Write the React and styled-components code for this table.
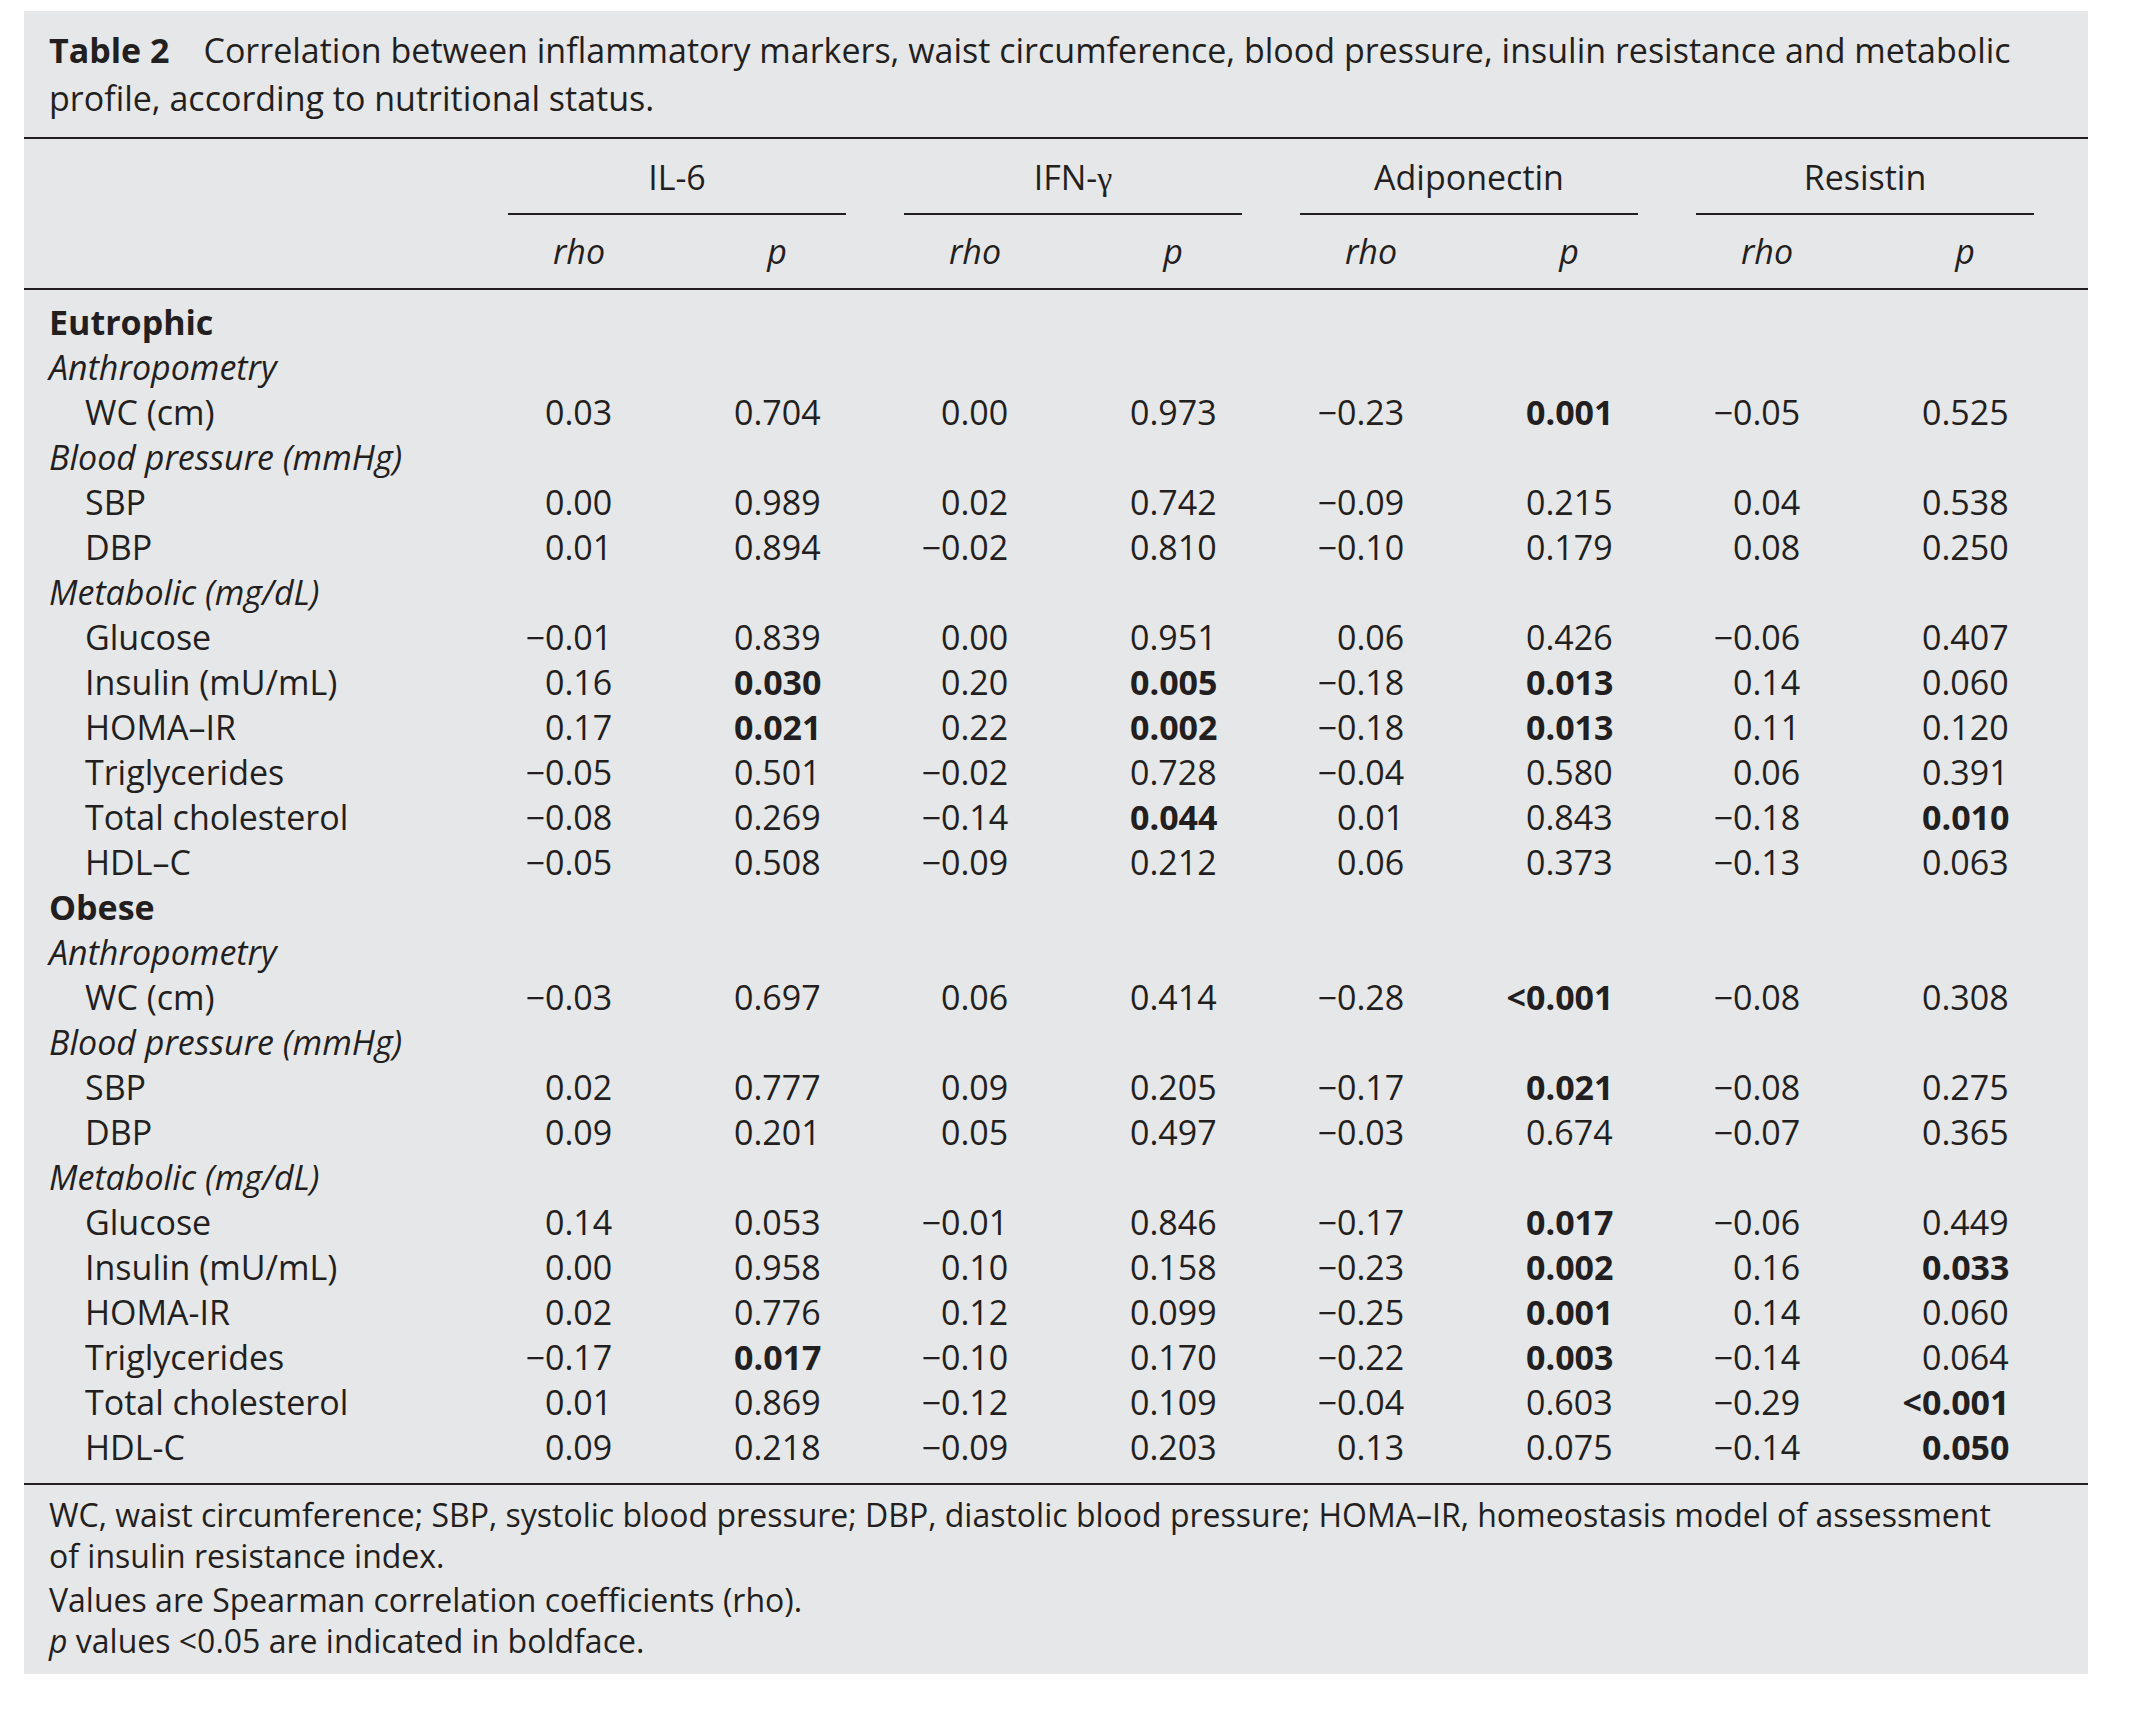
import React from 'react';
import styled, { createGlobalStyle } from 'styled-components';

const GlobalStyle = createGlobalStyle`
  html, body {
    margin: 0;
    padding: 0;
    background: #ffffff;
  }
  body {
    font-family: "Open Sans", "Liberation Sans", sans-serif;
    color: #231f20;
  }
`;

const INK = '#231f20';

const Page = styled.div`
  padding: 11px 0 40px 24px;
`;

const Panel = styled.div`
  width: 2064px;
  background: #e6e7e9;
  font-size: 34px;
  color: ${INK};
`;

const Caption = styled.div`
  padding: 15px 30px 15px 25px;
  line-height: 48px;
  white-space: nowrap;
`;

const CaptionLabel = styled.span`
  font-weight: 700;
  margin-right: 34px;
`;

const Grid = styled.div`
  display: grid;
  grid-template-columns: 431px repeat(8, 198px);
  padding: 0 24px 0 25px;
`;

const Head = styled.div`
  border-top: 2px solid ${INK};
  border-bottom: 2px solid ${INK};
`;

const GroupName = styled.div`
  grid-column: span 2;
  margin: 0 30px 0 28px;
  padding: 15.5px 0 12px;
  line-height: 45px;
  text-align: center;
  border-bottom: 2px solid ${INK};
`;

const Gamma = styled.span`
  font-family: "Liberation Serif", "DejaVu Serif", serif;
`;

const SubHead = styled.div`
  padding: 14px 0 14px;
  line-height: 45px;
  text-align: center;
  font-style: italic;
`;

const Body = styled.div`
  padding: 10px 0 13px;
`;

const Row = styled(Grid)`
  height: 45px;
  line-height: 45px;
  align-items: center;
`;

const Label = styled.div`
  padding-left: ${p => (p.$indent ? '36px' : '0')};
  font-weight: ${p => (p.$kind === 'group' ? 700 : 400)};
  font-style: ${p => (p.$kind === 'sub' ? 'italic' : 'normal')};
  white-space: nowrap;
`;

const Num = styled.div`
  display: grid;
  grid-template-columns: ${p => p.$lead}px auto;
  font-weight: ${p => (p.$bold ? 700 : 400)};
  white-space: nowrap;
`;

const Sign = styled.span`
  justify-self: end;
`;

const Notes = styled.div`
  border-top: 2px solid ${INK};
  padding: 9.5px 30px 12.5px 25px;
  font-size: 32px;
  line-height: 41px;
  white-space: nowrap;
`;

const Note = styled.p`
  margin: ${p => (p.$gap ? '3px' : '0')} 0 0;
`;

const groups = [
  { key: 'il6', name: 'IL-6' },
  { key: 'ifn', name: <>IFN-<Gamma>γ</Gamma></> },
  { key: 'adipo', name: 'Adiponectin' },
  { key: 'resis', name: 'Resistin' },
];

const M = '\u2212';

const block = (title, hyphen, data) => [
  { kind: 'group', label: title },
  { kind: 'sub', label: 'Anthropometry' },
  { label: 'WC (cm)', v: data[0] },
  { kind: 'sub', label: 'Blood pressure (mmHg)' },
  { label: 'SBP', v: data[1] },
  { label: 'DBP', v: data[2] },
  { kind: 'sub', label: 'Metabolic (mg/dL)' },
  { label: 'Glucose', v: data[3] },
  { label: 'Insulin (mU/mL)', v: data[4] },
  { label: `HOMA${hyphen}IR`, v: data[5] },
  { label: 'Triglycerides', v: data[6] },
  { label: 'Total cholesterol', v: data[7] },
  { label: `HDL${hyphen}C`, v: data[8] },
];

// '*' marks a p value printed in bold
const rows = [
  ...block('Eutrophic', '\u2013', [
    ['0.03', '0.704', '0.00', '0.973', '-0.23', '*0.001', '-0.05', '0.525'],
    ['0.00', '0.989', '0.02', '0.742', '-0.09', '0.215', '0.04', '0.538'],
    ['0.01', '0.894', '-0.02', '0.810', '-0.10', '0.179', '0.08', '0.250'],
    ['-0.01', '0.839', '0.00', '0.951', '0.06', '0.426', '-0.06', '0.407'],
    ['0.16', '*0.030', '0.20', '*0.005', '-0.18', '*0.013', '0.14', '0.060'],
    ['0.17', '*0.021', '0.22', '*0.002', '-0.18', '*0.013', '0.11', '0.120'],
    ['-0.05', '0.501', '-0.02', '0.728', '-0.04', '0.580', '0.06', '0.391'],
    ['-0.08', '0.269', '-0.14', '*0.044', '0.01', '0.843', '-0.18', '*0.010'],
    ['-0.05', '0.508', '-0.09', '0.212', '0.06', '0.373', '-0.13', '0.063'],
  ]),
  ...block('Obese', '-', [
    ['-0.03', '0.697', '0.06', '0.414', '-0.28', '*<0.001', '-0.08', '0.308'],
    ['0.02', '0.777', '0.09', '0.205', '-0.17', '*0.021', '-0.08', '0.275'],
    ['0.09', '0.201', '0.05', '0.497', '-0.03', '0.674', '-0.07', '0.365'],
    ['0.14', '0.053', '-0.01', '0.846', '-0.17', '*0.017', '-0.06', '0.449'],
    ['0.00', '0.958', '0.10', '0.158', '-0.23', '*0.002', '0.16', '*0.033'],
    ['0.02', '0.776', '0.12', '0.099', '-0.25', '*0.001', '0.14', '0.060'],
    ['-0.17', '*0.017', '-0.10', '0.170', '-0.22', '*0.003', '-0.14', '0.064'],
    ['0.01', '0.869', '-0.12', '0.109', '-0.04', '0.603', '-0.29', '*<0.001'],
    ['0.09', '0.218', '-0.09', '0.203', '0.13', '0.075', '-0.14', '*0.050'],
  ]),
];

// distance from the column's left edge to the leading "0"
const RHO_LEAD = 65;
const P_LEAD = 56;

function Value({ raw, isP }) {
  let text = raw;
  const bold = text.startsWith('*');
  if (bold) text = text.slice(1);
  let sign = '';
  if (text[0] === '-') {
    sign = M;
    text = text.slice(1);
  } else if (text[0] === '<') {
    sign = '<';
    text = text.slice(1);
  }
  return (
    <Num $lead={isP ? P_LEAD : RHO_LEAD} $bold={bold}>
      <Sign>{sign}</Sign>
      <span>{text}</span>
    </Num>
  );
}

export default function App() {
  return (
    <Page>
      <GlobalStyle />
      <Panel>
        <Caption>
          <CaptionLabel>Table 2</CaptionLabel>
          Correlation between inflammatory markers, waist circumference, blood pressure, insulin resistance and metabolic
          <br />
          profile, according to nutritional status.
        </Caption>

        <Head>
          <Grid>
            <div />
            {groups.map(g => (
              <GroupName key={g.key}>{g.name}</GroupName>
            ))}
          </Grid>
          <Grid>
            <div />
            {groups.map(g => (
              <React.Fragment key={g.key}>
                <SubHead>rho</SubHead>
                <SubHead>p</SubHead>
              </React.Fragment>
            ))}
          </Grid>
        </Head>

        <Body>
          {rows.map((r, i) => (
            <Row key={i}>
              <Label $kind={r.kind} $indent={!r.kind}>{r.label}</Label>
              {r.v && r.v.map((val, j) => <Value key={j} raw={val} isP={j % 2 === 1} />)}
            </Row>
          ))}
        </Body>

        <Notes>
          <Note>
            WC, waist circumference; SBP, systolic blood pressure; DBP, diastolic blood pressure; HOMA{'\u2013'}IR, homeostasis model of assessment
            <br />
            of insulin resistance index.
          </Note>
          <Note $gap>Values are Spearman correlation coefficients (rho).</Note>
          <Note>
            <i>p</i> values &lt;0.05 are indicated in boldface.
          </Note>
        </Notes>
      </Panel>
    </Page>
  );
}
